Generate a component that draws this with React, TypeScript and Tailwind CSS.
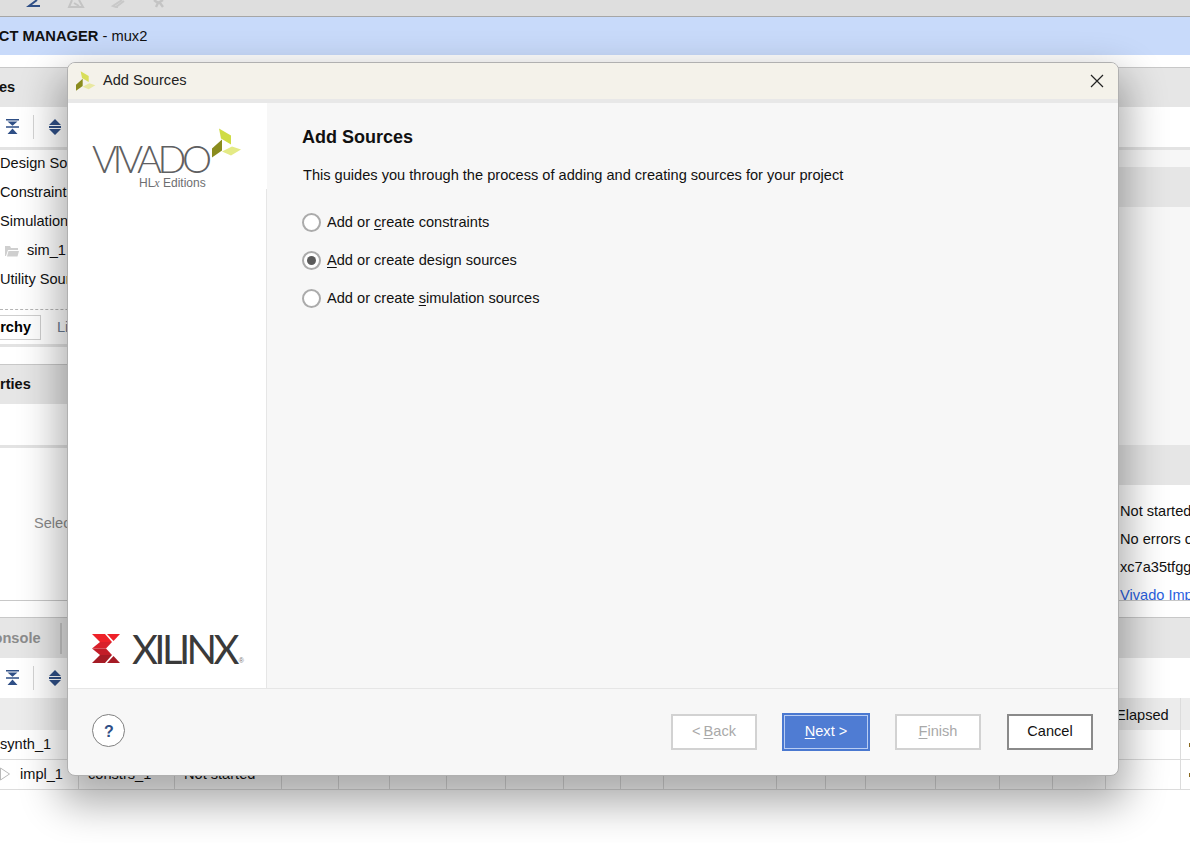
const sans = "font-['Liberation_Sans',Arial,sans-serif]";

function Collapse() {
  return (
    <svg width="13" height="16" viewBox="0 0 13 16" fill="#2f4f86">
      <path d="M0 0h13v1.5H0zM1.5 2.5h10L6.5 6.8zM0 7.3h13v1.4H0zM6.5 9.6l5 5.4h-10z" />
    </svg>
  );
}

function Expand() {
  return (
    <svg width="14" height="16" viewBox="0 0 14 16" fill="#2f4f86">
      <path d="M7 0l6 6H1zM1 7h12v2H1zM1 10h12l-6 6z" />
    </svg>
  );
}

function ToolRow() {
  return (
    <div className="flex h-[40px] items-center bg-white pl-[6px]">
      <Collapse />
      <div className="ml-[14px] mr-[14px] h-[24px] w-px bg-[#d4d4d4]" />
      <Expand />
    </div>
  );
}

function Header({ children, className = "h-[40px]" }: { children?: React.ReactNode; className?: string }) {
  return <div className={`flex items-center bg-[#e6e6e6] pt-[1px] text-[14.6px] font-bold text-[#111] ${className}`}>{children}</div>;
}

function TreeRow({ children }: { children: React.ReactNode }) {
  return <div className="flex h-[29px] items-center whitespace-nowrap text-[14.6px] text-[#111]">{children}</div>;
}

const colWidths = [79, 96, 107, 57, 51, 57, 59, 58, 57, 43, 113, 49, 40, 70, 64, 53, 53, 75, 10];

function TableRow({ first, second, third }: { first: React.ReactNode; second?: string; third?: string }) {
  return (
    <div className="flex h-[30px] border-b border-[#dcdcdc] bg-white text-[14.6px] text-[#111]">
      {colWidths.map((w, i) => (
        <div key={i} style={{ width: w }} className="flex shrink-0 items-center overflow-hidden whitespace-nowrap border-r border-[#dcdcdc] pl-[9px]">
          {i === 0 ? first : i === 1 ? second : i === 2 ? third : null}
          {i === 18 && <span className="ml-[-1px] block h-[4px] w-[2px] shrink-0 bg-[#8a6a20]" />}
        </div>
      ))}
    </div>
  );
}

function VivadoMark({ size = 30, muted }: { size?: number; muted?: boolean }) {
  return (
    <svg width={size} height={size} viewBox="0 0 30 30">
      <polygon points="7,0.5 19,7.5 19,16.5 9,10.5" fill={muted ? "#d8de5a" : "#cfdc45"} />
      <polygon points="0,20.5 10,11.5 10,22.5 0,29.5" fill="#8a8c1e" />
      <polygon points="10,23.5 20,18.5 29,21.5 19,27.5" fill={muted ? "#e8e8a0" : "#e4ea85"} />
    </svg>
  );
}

function XilinxMark() {
  return (
    <svg width="28" height="29" viewBox="0 0 28 29" className="shrink-0">
      <polygon points="0,0 13,0 20,8 8,8" fill="#ee2229" />
      <polygon points="8,8 20,8 14,14.5 0,14.5" fill="#d9202a" />
      <polygon points="0,14.5 14,14.5 20,21 8,21" fill="#c21d28" />
      <polygon points="8,21 20,21 13,29 0,29" fill="#a51b25" />
      <polygon points="15,0 28,0 21.5,7" fill="#ee2229" />
      <polygon points="15,29 28,29 21.5,22" fill="#a51b25" />
    </svg>
  );
}

function Radio({ checked }: { checked?: boolean }) {
  return (
    <span className="mt-[-1px] flex h-[19px] w-[19px] shrink-0 items-center justify-center rounded-full border-2 border-[#ababab] bg-white">
      {checked && <span className="h-[9px] w-[9px] rounded-full bg-[#5b5b5b]" />}
    </span>
  );
}

function Option({ checked, before, u, after }: { checked?: boolean; before: string; u: string; after: string }) {
  return (
    <div className="flex h-[38px] items-center gap-[6px] text-[14.6px] text-[#111]">
      <Radio checked={checked} />
      <span className="whitespace-pre">
        {before}
        <span className="underline underline-offset-2">{u}</span>
        {after}
      </span>
    </div>
  );
}

function DialogButton({ children, variant }: { children: React.ReactNode; variant: "disabled" | "primary" | "cancel" }) {
  const cls =
    variant === "primary"
      ? "h-[38px] w-[88px] border-[2px] border-[#4a78d0] bg-[#4f7cd3] text-white shadow-[inset_0_0_0_1px_#b9cdf3]"
      : variant === "cancel"
        ? "h-[36px] w-[86px] border-2 border-[#8a8a8a] bg-white text-[#111]"
        : "h-[36px] w-[86px] border-2 border-[#d2d2d2] bg-white text-[#a9a9a9]";
  return <div className={`flex items-center justify-center text-[14.6px] ${cls}`}>{children}</div>;
}

export default function App() {
  return (
    <div className={`relative h-[843px] w-[1190px] overflow-hidden bg-white ${sans}`}>
      {/* Underlying window */}
      <div className="relative h-[17px] overflow-hidden border-b border-[#a6a6a6] bg-[#dedede]">
        <svg width="170" height="8" viewBox="0 0 170 8" className="block">
          <path d="M37 0L29 6h11" fill="none" stroke="#2f4f86" strokeWidth="2" />
          <path d="M72 0L69 7h14L79 0M74 3l5 3" fill="none" stroke="#c4c4c4" strokeWidth="2" />
          <path d="M122 0l-9 6 3 1 8-6M113 7h5" fill="none" stroke="#c8c8c8" strokeWidth="2" />
          <path d="M154 0l4 3 5-3M158 3l-2 4M160 3l3 4" fill="none" stroke="#c4c4c4" strokeWidth="2.4" />
        </svg>
      </div>
      <div className="flex h-[38px] items-center overflow-hidden whitespace-nowrap bg-[#c8dafa] pt-[1px] text-[14.7px] text-[#111]">
        <span className="ml-[-11px] font-bold">ECT MANAGER</span>
        <span className="whitespace-pre"> - mux2</span>
      </div>

      <div className="flex h-[545px] flex-col pt-[12px]">
        <div className="flex min-h-0 flex-1 justify-between">
          {/* left column */}
          <div className="w-[300px] overflow-hidden border-t border-[#c8c8c8]">
            <Header className="h-[39px]"><span className="ml-[-1px]">es</span></Header>
            <ToolRow />
            <div className="h-[3px] bg-[#e3e3e3]" />
            <div className="mt-[-1px]">
              <TreeRow>Design Sources</TreeRow>
              <TreeRow>Constraints</TreeRow>
              <TreeRow>Simulation Sources</TreeRow>
              <TreeRow>
                <svg width="15" height="12" viewBox="0 0 15 12" className="ml-[5px] mr-[7px]">
                  <path d="M0 1h5l1 2h7v2H3L1 11H0z M3.5 6H14l-1.5 5.5H2z" fill="#cfcfcf" />
                </svg>
                sim_1
              </TreeRow>
              <TreeRow>Utility Sources</TreeRow>
            </div>
            <div className="mt-[15px] border-t border-dashed border-[#b5b5b5]" />
            <div className="mt-[5px] flex h-[25px] items-center text-[14.6px]">
              <div className="flex h-[25px] w-[41px] items-center justify-end border border-l-0 border-[#cfcfcf] pr-[9px] font-bold">rchy</div>
              <span className="ml-[16px] text-[#6a7a90]">Libraries</span>
            </div>
            <div className="mt-[4px] h-[3px] bg-[#e3e3e3]" />
            <div className="h-[17px]" />
            <Header className="h-[40px] border-t border-[#c8c8c8]"><span>rties</span></Header>
            <div className="h-[41px]" />
            <div className="h-[3px] bg-[#e3e3e3]" />
            <div className="flex h-[151px] items-center pl-[34px] text-[14.6px] text-[#8a8a8a]">Select an object</div>
          </div>
          {/* right column */}
          <div className="w-[260px] overflow-hidden border-t border-[#c8c8c8]">
            <Header className="h-[39px]" />
            <div className="h-[40px]" />
            <div className="h-[3px] bg-[#e3e3e3]" />
            <div className="h-[17px] bg-[#f7f7f7]" />
            <Header />
            <div className="h-[238px] bg-[#f7f7f7]" />
            <Header />
            <div className="flex flex-col pl-[190px] pt-[13px] text-[14.6px] text-[#111]">
              <div className="flex h-[28px] items-center whitespace-nowrap">Not started</div>
              <div className="flex h-[28px] items-center whitespace-nowrap">No errors or warnings</div>
              <div className="flex h-[28px] items-center whitespace-nowrap">xc7a35tfgg484-1</div>
              <div className="flex h-[28px] items-center whitespace-nowrap text-[#2a5fe0] underline">Vivado Implementation Defaults</div>
            </div>
          </div>
        </div>
      </div>

      {/* Bottom panel */}
      <div className="border-t border-[#c8c8c8]">
        <div className="h-[16px]" />
        <Header className="h-[41px] border-t border-[#c8c8c8]">
          <span className="ml-[-17px] flex h-[31px] w-[79px] items-center border-r-2 border-[#c8c8c8] text-[#8c8c8c]">Console</span>
        </Header>
        <ToolRow />
        <div className="flex h-[32px] items-center justify-end bg-[#ececec] text-[14.6px] text-[#111]">
          <div className="flex h-full w-[64px] items-center whitespace-nowrap pt-[3px]">Elapsed</div>
          <div className="h-full w-[10px] border-l border-[#dcdcdc]" />
        </div>
        <TableRow first={<span className="ml-[-9px]">synth_1</span>} />
        <TableRow
          first={
            <span className="ml-[-9px] flex items-center gap-[10px]">
              <svg width="10" height="14" viewBox="0 0 10 14" fill="none" stroke="#b9b9b9"><path d="M0.5 1l9 6-9 6z" /></svg>
              impl_1
            </span>
          }
          second="constrs_1"
          third="Not started"
        />
      </div>

      {/* Dialog */}
      <div className="absolute left-[67px] top-[62px] flex h-[714px] w-[1052px] flex-col overflow-hidden rounded-[8px] border border-[#b0b0b0] bg-[#f7f7f7] shadow-[0_20px_40px_8px_rgba(0,0,0,0.33)]">
        <div className="flex h-[36px] shrink-0 items-center bg-[#f4f2ea] pl-[8px] pr-[14px]">
          <VivadoMark size={20} muted />
          <span className="ml-[7px] text-[14.6px] text-[#222]">Add Sources</span>
          <svg className="ml-auto" width="14" height="14" viewBox="0 0 14 14" stroke="#222" strokeWidth="1.2">
            <path d="M1 1l12 12M13 1L1 13" />
          </svg>
        </div>
        <div className="h-[4px] shrink-0 bg-[#e8e8e8]" />
        <div className="flex min-h-0 flex-1">
          <div className="flex w-[199px] shrink-0 flex-col bg-white">
            <div className="relative h-[86px] pl-[24px] pt-[36px]">
              <span className="block whitespace-nowrap font-['Lato',sans-serif] text-[38px] font-light leading-[38px] tracking-[-4.3px] text-[#5f6062]">VIVADO</span>
              <span className="absolute left-[71px] top-[73px] whitespace-nowrap text-[12px] leading-[14px] text-[#6d6e70]">HL<i className="font-['Liberation_Serif',serif]">x</i> Editions</span>
              <span className="absolute left-[144px] top-[25px]"><VivadoMark size={30} /></span>
            </div>
            <div className="flex flex-1 flex-col justify-end border-r border-[#e6e6e6]">
              <div className="flex h-[54px] items-start gap-[12px] pl-[24px]">
                <XilinxMark />
                <span className="mt-[-5px] whitespace-nowrap font-['Lato',sans-serif] text-[40px] leading-[40px] tracking-[-3.6px] text-[#3a3a3a]">XILINX</span>
                <span className="ml-[-9px] mt-[23px] text-[7px] leading-[7px] text-[#777]">®</span>
              </div>
            </div>
          </div>
          <div className="flex-1 pl-[35px] pt-[23px]">
            <div className="text-[18px] font-bold leading-[22px] text-[#111]">Add Sources</div>
            <div className="mt-[18px] whitespace-nowrap pl-[1px] text-[14.6px] leading-[18px] text-[#111]">
              This guides you through the process of adding and creating sources for your project
            </div>
            <div className="mt-[20px]">
              <Option before="Add or " u="c" after="reate constraints" />
              <Option checked before="" u="A" after="dd or create design sources" />
              <Option before="Add or create " u="s" after="imulation sources" />
            </div>
          </div>
        </div>
        <div className="flex h-[87px] shrink-0 items-center border-t border-[#e6e6e6] pl-[24px] pr-[25px]">
          <div className="mb-[3px] flex h-[33px] w-[33px] items-center justify-center rounded-full border border-[#808080] bg-white pl-[1px] pt-[2px] text-[16px] font-bold text-[#2f4f86]">?</div>
          <div className="ml-auto flex items-center">
            <DialogButton variant="disabled">&lt; <span className="ml-[3px] underline underline-offset-2">B</span>ack</DialogButton>
            <div className="ml-[25px]"><DialogButton variant="primary"><span className="underline underline-offset-2">N</span>ext &gt;</DialogButton></div>
            <div className="ml-[25px]"><DialogButton variant="disabled"><span className="underline underline-offset-2">F</span>inish</DialogButton></div>
            <div className="ml-[26px]"><DialogButton variant="cancel">Cancel</DialogButton></div>
          </div>
        </div>
      </div>
    </div>
  );
}
